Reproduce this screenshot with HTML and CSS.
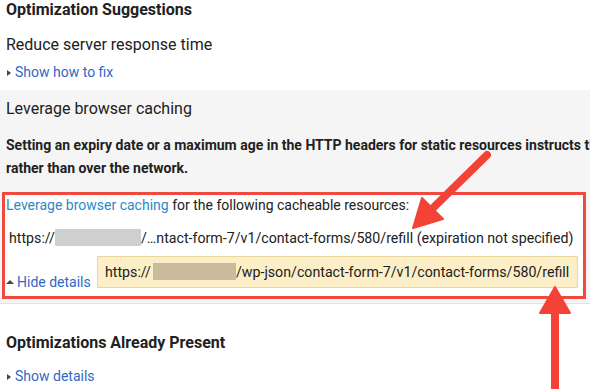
FILE: index.html
```html
<!DOCTYPE html>
<html lang="en">
<head>
  <meta charset="UTF-8">
  <title>PageSpeed Insights</title>
  <link rel="stylesheet" href="styles.css">
</head>
<body>
<div class="page">

  <!-- Suggestions -->
  <div class="block">
    <h2 class="block-title">Optimization Suggestions</h2>
    <p class="rule-title">Reduce server response time</p>
    <p class="toggle"><span class="caret"></span><a>Show how to fix</a></p>
  </div>

  <div class="block rule-open">
    <p class="rule-title">Leverage browser caching</p>
    <p class="rule-summary">Setting an expiry date or a maximum age in the HTTP headers for static resources instructs the browser to load previously downloaded resources from local disk<br>rather than over the network.</p>

    <div class="details">
      <p class="details-intro"><a class="doc-link">Leverage browser caching</a> for the following cacheable resources:</p>
      <p class="resource">https://<span class="blur"></span>/…ntact-form-7/v1/contact-forms/580/refill (expiration not specified)</p>
      <p class="toggle hide"><span class="caret up"></span><a>Hide details</a></p>
      <div class="tooltip">https://<span class="blur tan"></span>/wp-json/contact-form-7/v1/contact-forms/580/refill</div>
    </div>
  </div>

  <!-- Already present -->
  <div class="block">
    <h2 class="block-title present">Optimizations Already Present</h2>
    <p class="toggle more"><span class="caret"></span><a>Show details</a></p>
  </div>

  <svg class="arrows" width="590" height="389" viewBox="0 0 590 389">
    <g fill="#f44336" stroke="#f44336">
      <line x1="487" y1="155" x2="433" y2="208" stroke-width="8" stroke-linecap="round"/>
      <polygon points="413,228 443,219 422,198" stroke-width="2" stroke-linejoin="round"/>
      <line x1="555" y1="310" x2="555" y2="392" stroke-width="8"/>
      <polygon points="555,287 570,313 540,313" stroke-width="2" stroke-linejoin="round"/>
    </g>
  </svg>
</div>
</body>
</html>
```

FILE: styles.css
```css
* {
  box-sizing: border-box;
}
body {
  margin: 0;
  font-family: Roboto, 'Noto Sans', sans-serif;
  color: #212121;
  background: #fff;
}

.page {
  position: relative;
  width: 590px;
  height: 389px;
  overflow: hidden;
}

p {
  margin: 0;
}

.block {
  padding: 0 6px 9px;
}

.block-title {
  margin: 0;
  font-size: 16px;
  line-height: 20px;
  font-weight: bold;
}

.block-title.present {
  margin-top: 29px;
}

.rule-title {
  margin-top: 15px;
  font-size: 16px;
  line-height: 20px;
}

.toggle {
  margin-top: 8px;
  font-size: 14px;
  line-height: 18px;
}

.toggle a {
  color: #3367c6;
  cursor: pointer;
}

.caret {
  display: inline-block;
  width: 0;
  height: 0;
  margin: 0 4px 1px 1px;
  border-left: 4px solid #444;
  border-top: 3.5px solid transparent;
  border-bottom: 3.5px solid transparent;
}

.caret.up {
  margin: 0 3px 3px 0;
  border-left: 4px solid transparent;
  border-right: 4px solid transparent;
  border-top: 0;
  border-bottom: 4px solid #444;
}

.rule-open {
  background: #f5f5f5;
  padding: 9px 0 4px;
  border-bottom: 1px solid #e2e2e2;
}

.rule-open .rule-title {
  margin: 0;
  padding-left: 6px;
}

.rule-summary {
  margin-top: 15px;
  padding-left: 6px;
  font-size: 14px;
  line-height: 23px;
  font-weight: bold;
  white-space: nowrap;
}

.details {
  position: relative;
  margin: 12px 0 0 2px;
  width: 584px;
  padding: 0 0 4px;
  background: #fff;
  border: 3px solid #f04a3e;
}

.details-intro {
  padding-left: 1px;
  font-size: 14px;
  line-height: 20px;
}

.doc-link {
  color: #2a8ac8;
}

.resource {
  margin-top: 13px;
  padding-left: 4px;
  font-size: 14.2px;
  line-height: 20px;
  white-space: nowrap;
}

.blur {
  display: inline-block;
  width: 86px;
  height: 17px;
  vertical-align: -3px;
  background: #cfcfcf;
}

.blur.tan {
  width: 83px;
  background: #c9bb9c;
  margin-left: 2px;
}

.toggle.hide {
  margin-top: 24px;
  padding-left: 1px;
  line-height: 20px;
}

.tooltip {
  position: absolute;
  left: 92px;
  top: 61px;
  width: 481px;
  height: 32px;
  padding-left: 7px;
  background: #fcefc8;
  border: 1px solid #e9d79c;
  font-size: 14.2px;
  line-height: 30px;
  white-space: nowrap;
}

.toggle.more {
  margin-top: 14px;
}

.arrows {
  position: absolute;
  left: 0;
  top: 0;
  pointer-events: none;
}
```
